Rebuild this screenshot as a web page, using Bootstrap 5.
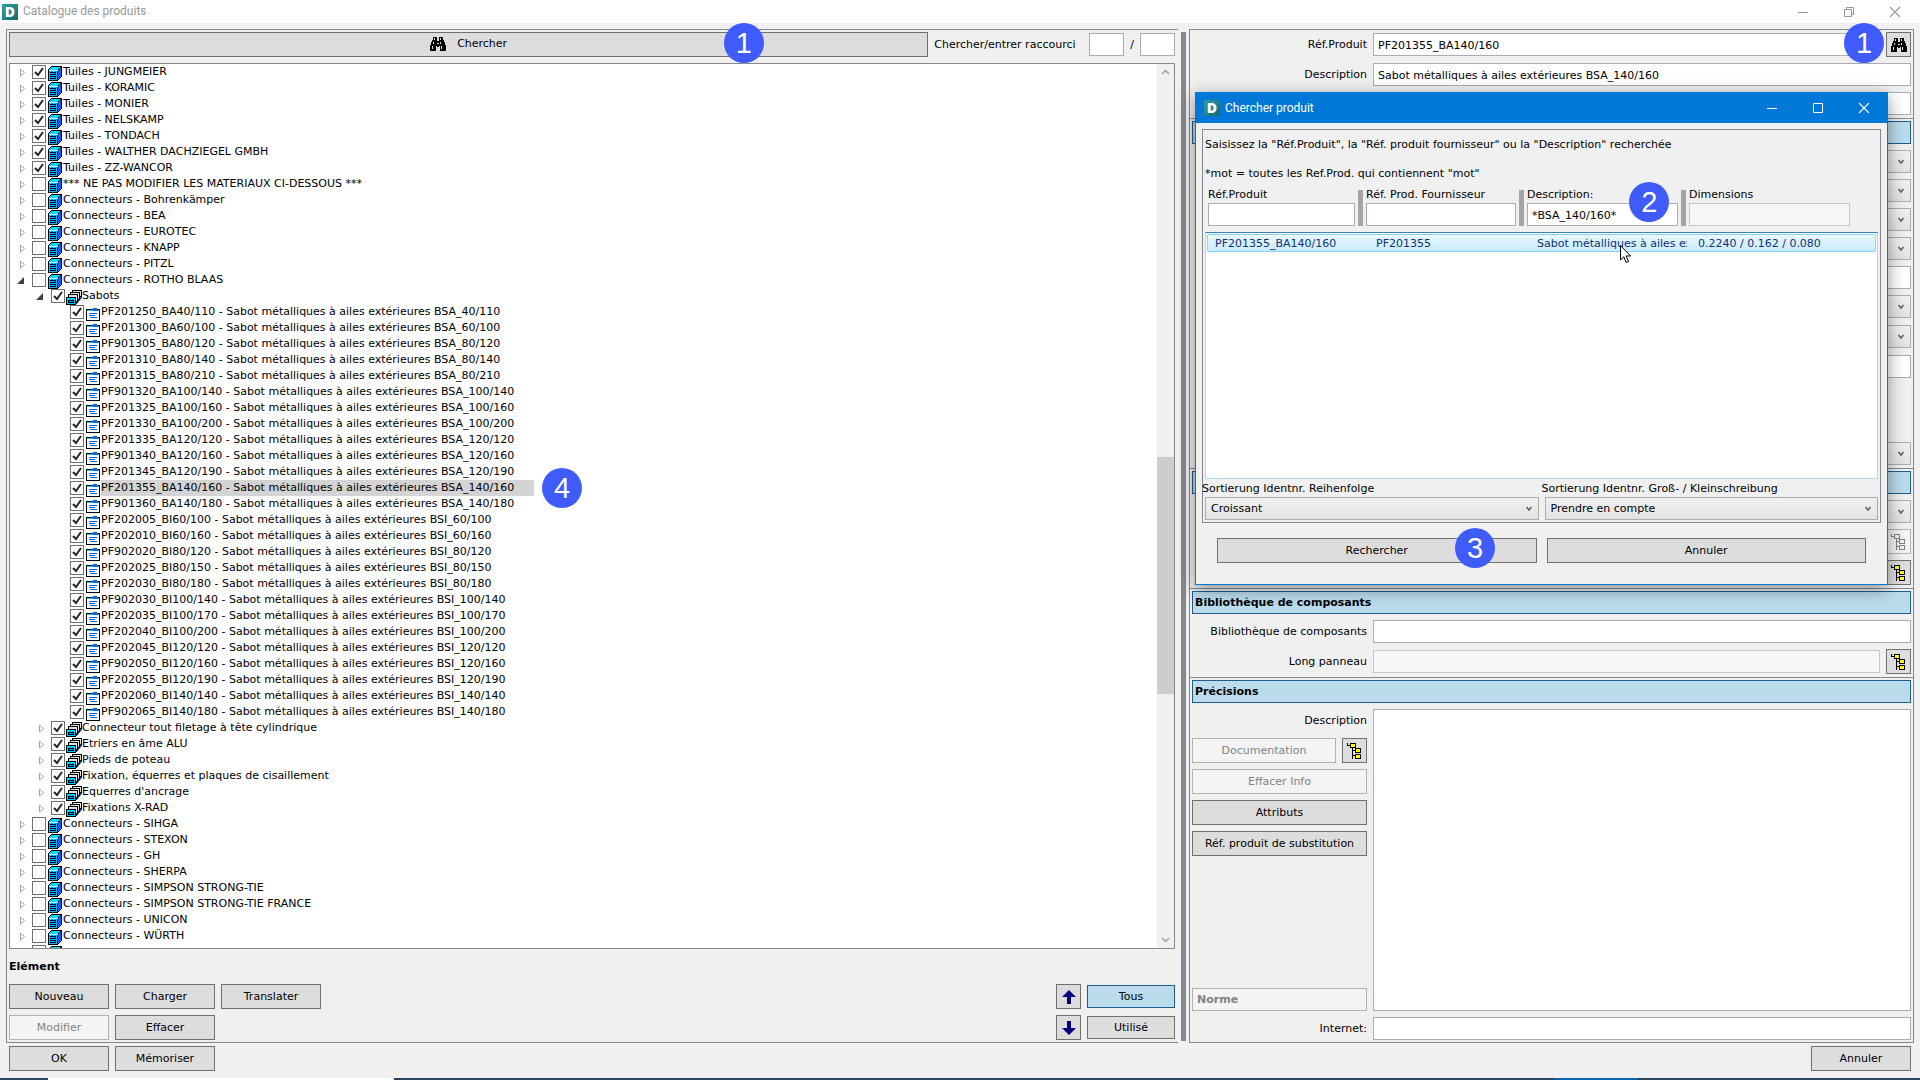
<!DOCTYPE html>
<html lang="fr">
<head>
<meta charset="utf-8">
<meta name="viewport" content="width=device-width, initial-scale=1">
<title>Catalogue des produits</title>
<link href="https://cdn.jsdelivr.net/npm/bootstrap@5.3.0/dist/css/bootstrap.min.css" rel="stylesheet">
<style>
  :root { --face:#f0f0f0; --frame:#828790; --accent:#0078d7; }
  body { font-family:"DejaVu Sans",Verdana,sans-serif; font-size:11px; line-height:16px; color:#000; background:var(--face); }
  .titlebar { height:23px; background:#fff; color:#999; font:12px/23px Roboto,"Open Sans",sans-serif; padding:0 2px; gap:5px; }
  .logo-d { width:16px; height:16px; background:linear-gradient(135deg,#2b9fa3,#176a72); color:#fff; font:900 14px/16px "Open Sans",sans-serif; text-align:center; flex:none; }
  .caption-btns { display:flex; }
  .caption-btn { width:46px; height:23px; padding:0; border:0; background:none; color:inherit; display:flex; align-items:center; justify-content:center; }
  .caption-btn svg { display:block; }

  .workspace { padding:6px 6px 0; gap:3px; min-height:0; }
  .pane-left { flex:1166 1 0; border:1px solid var(--frame); border-right:0; padding:2px 3px 2px 2px; gap:6px; }
  .splitter { width:5px; flex:none; background:#84888f; margin:3px 0 2px; }
  .pane-right { flex:723 1 0; border:1px solid var(--frame); }
  .gap-6 { gap:6px; }

  .ui-btn { height:25px; padding:1px 4px 0; border:1px solid #707070; border-radius:0; background:#ddd; color:#000; font-size:11px; line-height:16px; }
  .ui-btn:hover { background:#e5f1fb; border-color:var(--accent); color:#000; }
  .ui-btn:disabled { background:#f4f4f4; border-color:#adb2b5; color:#838383; opacity:1; }
  .ui-btn.short { height:23px; }
  .ui-btn.active-filter { background:#badced; border-color:#1f5c8c; }
  .search-btn { padding:0 0 2px; gap:11px; }
  .w-std { width:100px; }
  .w-filter { width:88px; }
  .w-icon { width:25px; padding:0; display:flex; align-items:center; justify-content:center; flex:none; }
  .shortcut-label { width:149px; flex:none; white-space:nowrap; padding-top:1px; }

  .ui-input { height:23px; min-height:0; padding:1px 4px 0; border:1px solid #abadb3; border-radius:0; background:#fff; color:#000; font-size:11px; line-height:16px; }
  .ui-input:disabled { background:#f7f7f7; border-color:#c6c6c6; }
  .ui-select { height:23px; padding:1px 20px 0 5px; border:1px solid #acacac; border-radius:0; color:#000; font-size:11px; line-height:16px;
    background:url("data:image/svg+xml,%3Csvg xmlns='http://www.w3.org/2000/svg' width='8' height='6'%3E%3Cpath d='M1.500 1l2.500 3 2.500-3' fill='none' stroke='%23606060' stroke-width='1.500'/%3E%3C/svg%3E") no-repeat right 5px top 8px/8px 6px, linear-gradient(#f0f0f0,#e3e3e3); }
  .w-short { width:35px; flex:none; }

  .tree-box { border:1px solid var(--frame); background:#fff; min-height:0; }
  .tree-list { overflow:hidden; min-width:0; }
  .tree-row { height:16px; white-space:nowrap; }
  .tree-row.lvl-1 { padding-left:19px; }
  .tree-row.lvl-2 { padding-left:38px; }
  .twisty { width:22px; height:16px; flex:none; display:block; }
  .tree-row label { display:flex; height:16px; }
  .tree-row input { appearance:none; width:14px; height:14px; margin:1px 0 0; border:1px solid #707070; background:#fff; flex:none; }
  .tree-row input:checked { background:url("data:image/svg+xml,%3Csvg xmlns='http://www.w3.org/2000/svg' width='12' height='12'%3E%3Cpath d='M2 6l3 3 5-7' fill='none' stroke='%23222' stroke-width='2'/%3E%3C/svg%3E") center no-repeat; }
  .tree-row svg.node { width:17px; height:17px; flex:none; overflow:visible; }
  .tree-row .node-text { line-height:16px; height:16px; }
  .tree-row.chosen .node-text { background:#d4d4d4; min-width:433px; }
  .scroll-track { width:17px; flex:none; background:#f0f0f0; }
  .scroll-track svg { display:block; width:17px; height:17px; }
  .scroll-thumb { background:#cdcdcd; flex:237 1 0; }
  .space-above { flex:376 1 0; }
  .space-below { flex:237 1 0; }

  .block { padding:2px; padding-bottom:3px; display:flex; flex-direction:column; gap:6px; }
  .block + .block { border-top:1px solid var(--frame); }
  .block:last-child { padding-bottom:2px; }
  .block-title { height:23px; margin:0; padding:1px 2px 0; border:1px solid #1f5c8c; background:#badced; font-size:11px; font-weight:700; line-height:20px; }
  .field { display:flex; align-items:center; gap:6px; min-height:23px; }
  .field > label, .side-col { width:175px; flex:none; text-align:right; }
  .field > label { padding-top:1px; }
  .field.tall { min-height:25px; }

  .footer-bar { padding:3px 9px 7px; }
  .taskbar { height:2px; background:#2c4257; }
  .taskbar i { display:block; height:2px; }

  .step-dot { width:40px; height:40px; border-radius:50%; background:#405bfb; color:#fff; font:29px/40px "Liberation Sans",Arial,sans-serif; text-align:center; z-index:5; pointer-events:none; }
  .dot-ref { right:27px; top:-9px; }
  .dot-mid { left:81%; top:9px; }
  .dot-crit { left:81%; top:16px; }

  .finder { position:absolute; top:92px; right:32px; width:693px; border:1px solid var(--accent); background:var(--face); box-shadow:0 4px 16px rgba(0,0,0,.42); z-index:10; }
  .finder-title { height:30px; background:var(--accent); color:#fff; font:12px/30px Roboto,"Open Sans",sans-serif; padding-left:8px; gap:5px; }
  .finder-title .caption-btn { height:30px; }
  .finder-body { margin:6px 6px 0; border:1px solid var(--frame); padding:2px; }
  .finder-body p { margin:0; line-height:16px; }
  .finder-body p.intro { padding-top:5px; margin-bottom:13px; }
  .crits { gap:3px; padding:4px 28px 6px 3px; }
  .crit { display:flex; flex-direction:column; }
  .crit label { height:17px; line-height:17px; }
  .crit-bar { width:5px; height:36px; background:#a5a5a5; flex:none; align-self:flex-end; }
  .hits { height:247px; border:1px solid #b5d7e8; border-top-color:#3c7fb1; background:#fff; padding:1px; }
  .hit { height:18px; border:1px solid #84d4f5; border-radius:2px; background:linear-gradient(#ebf8fe,#c6ebfb); color:#10307c; padding-left:7px; line-height:17px; white-space:nowrap; }
  .hit span { flex:none; width:161px; overflow:hidden; }
  .hit .clip-cell { width:150px; margin-right:11px; }
  .pointer { left:412px; top:10px; z-index:6; }
  .sorts { gap:6px; padding-top:2px; }
  .sorts label { display:block; margin-left:-3px; }
  .finder-actions { gap:10px; padding:15px 21px 21px; }
  #prec { resize:none; }
</style>
</head>
<body class="vh-100 overflow-hidden d-flex flex-column position-relative">

<svg class="d-none" xmlns="http://www.w3.org/2000/svg">
  <symbol id="i-cabinet" viewBox="0 0 17 17">
    <g shape-rendering="crispEdges">
      <path d="M2 5h1V4h1V3h1V2h11v11h-1v1h-1v1h-1v1h-1v1H2z" fill="#000"/>
      <path d="M3 6V5h1V4h1V3h9v1h-1v1h-1v1z" fill="#00d8ff"/>
      <path d="M12 6h1V5h1V4h1v9h-1v1h-1v1h-1z" fill="#0060ff"/>
      <path d="M3 7h8v9H3z" fill="#00b8ff"/>
      <path d="M3 6h9v1H3z" fill="#d0f8ff"/>
      <path d="M4 8h6v1H4zM9 8h1v3H9zM4 10h6v1H4zM4 12h6v1H4zM9 12h1v3H9zM4 14h6v1H4zM5 9" fill="#003"/>
    </g>
  </symbol>
  <symbol id="i-stack" viewBox="0 0 17 17">
    <path d="M11 9.500L16.500 4v5.500L11 16z" fill="#0068ff" stroke="#000" stroke-width="1"/>
    <g stroke="#000" fill="#ddd" shape-rendering="crispEdges">
      <path d="M7.500 2.500h9v6h-9z"/>
      <path d="M5.500 4.500h9v7h-9z"/>
      <path d="M3.500 6.500h9v7h-9z"/>
      <path d="M1.500 9.500h9v7h-9z" fill="#00d0ff"/>
      <path d="M3.500 12.500h5v2h-5z" fill="#00a0ff"/>
    </g>
  </symbol>
  <symbol id="i-sheet" viewBox="0 0 17 17">
    <g shape-rendering="crispEdges">
      <path d="M2 5h14v12H2z" fill="#000"/>
      <path d="M3 8h12v8H3z" fill="#fff"/>
      <path d="M3 6h12v1H3z" fill="#00d8ff"/>
      <path d="M9 4h4v1h1v2H8V5h1z" fill="#0068e0"/>
      <path d="M3 7h12v1H3z" fill="#fff"/>
      <path d="M5 9h8v1H5zM5 11h6v1H5zM6 13h7v1H6z" fill="#0068ff"/>
    </g>
  </symbol>
  <symbol id="i-binoc" viewBox="0 0 16 14">
    <g shape-rendering="crispEdges">
      <path d="M3 0h4v4h2V0h4v3h1v2h1v3h1v6h-6V9H9v1H7V9H6v5H0V8h1V5h1V3h1z" fill="#000"/>
      <path d="M4 1h1v2H4zM10 1h1v2h-1zM3 5h1v2H3zM10 5h1v2h-1zM2 9h1v3H2zM11 9h1v3h-1zM7 6h2v1H7z" fill="#ddd"/>
    </g>
  </symbol>
  <symbol id="i-nodes" viewBox="0 0 15 17">
    <g shape-rendering="crispEdges">
      <path d="M0 1h1v2h3v1H0zM5 5h1v12H5zM6 8h3v1H6zM6 13h3v1H6z" fill="currentColor"/>
      <path d="M3 1h6v5H3zM8 6h6v5H8zM8 12h6v5H8z" fill="currentColor"/>
      <path d="M4 2h4v3H4zM9 7h4v3H9zM9 13h4v3H9z" fill="var(--lamp,#ff0)"/>
    </g>
  </symbol>
  <symbol id="i-min" viewBox="0 0 12 12"><path d="M1 6.500h10" stroke="currentColor"/></symbol>
  <symbol id="i-max" viewBox="0 0 12 12"><path d="M1.500 1.500h9v9h-9z" fill="none" stroke="currentColor"/></symbol>
  <symbol id="i-restore" viewBox="0 0 12 12"><path d="M1.500 3.500h7v7h-7zM3.500 3.500v-2h7v7h-2" fill="none" stroke="currentColor"/></symbol>
  <symbol id="i-close" viewBox="0 0 12 12"><path d="M1 1l10 10M11 1L1 11" stroke="currentColor" stroke-width="1.100"/></symbol>
</svg>

<header class="titlebar d-flex align-items-center">
  <span class="logo-d">D</span><span class="flex-grow-1">Catalogue des produits</span>
  <div class="caption-btns">
    <button class="caption-btn" aria-label="Réduire"><svg width="12" height="12"><use href="#i-min"/></svg></button>
    <button class="caption-btn" aria-label="Restaurer"><svg width="12" height="12"><use href="#i-restore"/></svg></button>
    <button class="caption-btn" aria-label="Fermer"><svg width="12" height="12"><use href="#i-close"/></svg></button>
  </div>
</header>

<main class="workspace d-flex flex-grow-1">
  <section class="pane-left d-flex flex-column">
    <div class="d-flex align-items-center gap-6">
      <button class="ui-btn search-btn flex-grow-1 position-relative d-flex align-items-center justify-content-center">
        <svg width="16" height="14"><use href="#i-binoc"/></svg><span>Chercher</span>
        <span class="step-dot position-absolute translate-middle" style="left:80%;top:10px">1</span>
      </button>
      <label for="short1" class="shortcut-label">Chercher/entrer raccourci</label>
      <input id="short1" class="ui-input w-short"><span>/</span>
      <input class="ui-input w-short" aria-label="Raccourci, suite">
    </div>

    <div class="tree-box d-flex flex-grow-1">
      <div class="tree-list flex-grow-1" id="tree"></div>
      <div class="scroll-track d-flex flex-column">
        <svg viewBox="0 0 17 17"><path d="M5 10l3.500-3.500L12 10" fill="none" stroke="#a0a0a0" stroke-width="1.500"/></svg>
        <div class="space-above"></div><div class="scroll-thumb"></div><div class="space-below"></div>
        <svg viewBox="0 0 17 17"><path d="M5 7l3.500 3.500L12 7" fill="none" stroke="#a0a0a0" stroke-width="1.500"/></svg>
      </div>
    </div>

    <div class="field fw-bold">Elément</div>
    <div class="d-flex align-items-center gap-6">
      <button class="ui-btn w-std">Nouveau</button>
      <button class="ui-btn w-std">Charger</button>
      <button class="ui-btn w-std">Translater</button>
      <button class="ui-btn w-icon ms-auto" aria-label="Monter"><svg width="14" height="14"><path d="M7 0l7 7H9v7H5V7H0z" fill="#000080"/></svg></button>
      <button class="ui-btn short w-filter active-filter">Tous</button>
    </div>
    <div class="d-flex align-items-center gap-6">
      <button class="ui-btn w-std" disabled>Modifier</button>
      <button class="ui-btn w-std">Effacer</button>
      <button class="ui-btn w-icon ms-auto" aria-label="Descendre"><svg width="14" height="14"><path d="M7 14l7-7H9V0H5v7H0z" fill="#000080"/></svg></button>
      <button class="ui-btn short w-filter">Utilisé</button>
    </div>
  </section>

  <div class="splitter"></div>

  <section class="pane-right d-flex flex-column">
    <div class="block">
      <div class="field tall position-relative">
        <label for="ref">Réf.Produit</label>
        <input id="ref" class="ui-input flex-grow-1" value="PF201355_BA140/160">
        <button class="ui-btn w-icon" aria-label="Chercher"><svg width="16" height="14"><use href="#i-binoc"/></svg></button>
        <span class="step-dot dot-ref position-absolute">1</span>
      </div>
      <div class="field"><label for="desc">Description</label><input id="desc" class="ui-input flex-grow-1" value="Sabot métalliques à ailes extérieures BSA_140/160"></div>
      <div class="field"><label></label><input class="ui-input flex-grow-1" aria-label="Description 2"></div>
    </div>
    <div class="block">
      <h2 class="block-title"></h2>
      <div class="field"><label></label><select class="ui-select form-select" aria-label="Champ 1"><option></option></select></div>
      <div class="field"><label></label><select class="ui-select form-select" aria-label="Champ 2"><option></option></select></div>
      <div class="field"><label></label><select class="ui-select form-select" aria-label="Champ 3"><option></option></select></div>
      <div class="field"><label></label><select class="ui-select form-select" aria-label="Champ 4"><option></option></select></div>
      <div class="field"><label></label><input class="ui-input flex-grow-1" aria-label="Champ 5"></div>
      <div class="field"><label></label><select class="ui-select form-select" aria-label="Champ 6"><option></option></select></div>
      <div class="field tall"><label></label><select class="ui-select form-select" aria-label="Champ 7"><option></option></select></div>
      <div class="field"><label></label><input class="ui-input flex-grow-1" aria-label="Champ 8"></div>
      <div class="field"></div>
      <div class="field"></div>
      <div class="field"><label></label><select class="ui-select form-select" aria-label="Champ 9"><option></option></select></div>
    </div>
    <div class="block">
      <h2 class="block-title"></h2>
      <div class="field"><label></label><select class="ui-select form-select" aria-label="Champ 10"><option></option></select></div>
      <div class="field tall justify-content-end"><button class="ui-btn w-icon" disabled aria-label="Arborescence"><svg width="15" height="17" style="--lamp:#f4f4f4"><use href="#i-nodes"/></svg></button></div>
      <div class="field tall justify-content-end"><button class="ui-btn w-icon" aria-label="Arborescence"><svg width="15" height="17"><use href="#i-nodes"/></svg></button></div>
    </div>
    <div class="block">
      <h2 class="block-title">Bibliothèque de composants</h2>
      <div class="field"><label for="bib">Bibliothèque de composants</label><input id="bib" class="ui-input flex-grow-1"></div>
      <div class="field tall"><label for="long">Long panneau</label><input id="long" class="ui-input flex-grow-1" disabled>
        <button class="ui-btn w-icon" aria-label="Arborescence"><svg width="15" height="17"><use href="#i-nodes"/></svg></button></div>
    </div>
    <div class="block flex-grow-1">
      <h2 class="block-title">Précisions</h2>
      <div class="d-flex gap-6 flex-grow-1">
        <div class="side-col d-flex flex-column gap-6">
          <div class="field justify-content-end"><label for="prec">Description</label></div>
          <div class="d-flex gap-6">
            <button class="ui-btn flex-grow-1" disabled>Documentation</button>
            <button class="ui-btn w-icon" aria-label="Arborescence"><svg width="15" height="17"><use href="#i-nodes"/></svg></button>
          </div>
          <button class="ui-btn" disabled>Effacer Info</button>
          <button class="ui-btn">Attributs</button>
          <button class="ui-btn text-nowrap">Réf. produit de substitution</button>
          <button class="ui-btn short mt-auto text-start fw-bold px-1" disabled>Norme</button>
        </div>
        <textarea id="prec" class="ui-input flex-grow-1 h-auto"></textarea>
      </div>
      <div class="field"><label for="net">Internet:</label><input id="net" class="ui-input flex-grow-1"></div>
    </div>
  </section>
</main>

<footer class="footer-bar d-flex gap-6">
  <button class="ui-btn w-std">OK</button>
  <button class="ui-btn w-std">Mémoriser</button>
  <button class="ui-btn w-std ms-auto">Annuler</button>
</footer>
<div class="taskbar d-flex">
  <i style="width:2.5%"></i><i class="bg-white" style="width:18%"></i><i style="width:60.4%"></i><i style="width:4.4%;background:#0a64ad"></i>
</div>

<section class="finder" role="dialog" aria-label="Chercher produit">
  <div class="finder-title d-flex align-items-center">
    <span class="logo-d">D</span><span class="flex-grow-1">Chercher produit</span>
    <div class="caption-btns">
      <button class="caption-btn" aria-label="Réduire"><svg width="12" height="12"><use href="#i-min"/></svg></button>
      <button class="caption-btn" aria-label="Agrandir"><svg width="12" height="12"><use href="#i-max"/></svg></button>
      <button class="caption-btn" aria-label="Fermer"><svg width="12" height="12"><use href="#i-close"/></svg></button>
    </div>
  </div>
  <div class="finder-body">
    <p class="intro">Saisissez la "Réf.Produit", la "Réf. produit fournisseur" ou la "Description" recherchée</p>
    <p>*mot = toutes les Ref.Prod. qui contiennent "mot"</p>
    <div class="crits d-flex position-relative">
      <div class="crit" style="flex:147 1 0"><label for="c1">Réf.Produit</label><input id="c1" class="ui-input w-100"></div>
      <div class="crit-bar"></div>
      <div class="crit" style="flex:150 1 0"><label for="c2">Réf. Prod. Fournisseur</label><input id="c2" class="ui-input w-100"></div>
      <div class="crit-bar"></div>
      <div class="crit position-relative" style="flex:151 1 0"><label for="c3">Description:</label><input id="c3" class="ui-input w-100" value="*BSA_140/160*">
        <span class="step-dot dot-crit position-absolute translate-middle">2</span></div>
      <div class="crit-bar"></div>
      <div class="crit" style="flex:161 1 0"><label for="c4">Dimensions</label><input id="c4" class="ui-input w-100" disabled></div>
    </div>
    <div class="hits">
      <div class="hit d-flex position-relative">
        <span>PF201355_BA140/160</span><span>PF201355</span><span class="clip-cell">Sabot métalliques à ailes extérieures</span><span>0.2240 / 0.162 / 0.080</span>
        <svg class="pointer position-absolute" width="13" height="20"><path d="M.5.5v14.500l3.300-3.200 2.400 5.700 2.300-1-2.400-5.500h4.500z" fill="#fff" stroke="#000"/></svg>
      </div>
    </div>
    <div class="sorts d-flex">
      <div class="flex-fill w-50"><label for="s1">Sortierung Identnr. Reihenfolge</label>
        <select id="s1" class="ui-select form-select"><option>Croissant</option></select></div>
      <div class="flex-fill w-50"><label for="s2">Sortierung Identnr. Groß- / Kleinschreibung</label>
        <select id="s2" class="ui-select form-select"><option>Prendre en compte</option></select></div>
    </div>
  </div>
  <div class="finder-actions d-flex">
    <button class="ui-btn flex-fill w-50 position-relative">Rechercher<span class="step-dot dot-mid position-absolute translate-middle">3</span></button>
    <button class="ui-btn flex-fill w-50">Annuler</button>
  </div>
</section>

<script src="https://cdn.jsdelivr.net/npm/bootstrap@5.3.0/dist/js/bootstrap.bundle.min.js"></script>
<script>
  const shoe = (ref, kind, size) => ({ lvl: 2, on: true, text: `PF${ref}_${kind.slice(1)}${size} - Sabot métalliques à ailes extérieures BS${kind[0]}_${size}` });
  const ba = [["201250","40/110"],["201300","60/100"],["901305","80/120"],["201310","80/140"],["201315","80/210"],["901320","100/140"],["201325","100/160"],["201330","100/200"],["201335","120/120"],["901340","120/160"],["201345","120/190"],["201355","140/160"],["901360","140/180"]];
  const bi = [["202005","60/100"],["202010","60/160"],["902020","80/120"],["202025","80/150"],["202030","80/180"],["902030","100/140"],["202035","100/170"],["202040","100/200"],["202045","120/120"],["902050","120/160"],["202055","120/190"],["202060","140/140"],["902065","140/180"]];
  const rows = [
    ...["JUNGMEIER","KORAMIC","MONIER","NELSKAMP","TONDACH","WALTHER DACHZIEGEL GMBH","ZZ-WANCOR"].map(n => ({ lvl: 0, on: true, text: "Tuiles - " + n })),
    { lvl: 0, text: "*** NE PAS MODIFIER LES MATERIAUX CI-DESSOUS ***" },
    ...["Bohrenkämper","BEA","EUROTEC","KNAPP","PITZL"].map(n => ({ lvl: 0, text: "Connecteurs - " + n })),
    { lvl: 0, open: true, text: "Connecteurs - ROTHO BLAAS" },
    { lvl: 1, on: true, open: true, text: "Sabots" },
    ...ba.map(([r, s]) => shoe(r, "ABA", s)),
    ...bi.map(([r, s]) => shoe(r, "IBI", s)),
    ...["Connecteur tout filetage à tête cylindrique","Etriers en âme ALU","Pieds de poteau","Fixation, équerres et plaques de cisaillement","Equerres d'ancrage","Fixations X-RAD"].map(t => ({ lvl: 1, on: true, text: t })),
    ...["SIHGA","STEXON","GH","SHERPA","SIMPSON STRONG-TIE","SIMPSON STRONG-TIE FRANCE","UNICON","WÜRTH"].map(n => ({ lvl: 0, text: "Connecteurs - " + n })),
    { lvl: 0, text: "" }
  ];
  const icons = ["i-cabinet", "i-stack", "i-sheet"];
  const closed = '<path d="M10.500 5v7l4-3.500z" fill="#fff" stroke="#a6a6a6"/>';
  const opened = '<path d="M14 5v7H7z" fill="#404040"/>';
  document.getElementById("tree").innerHTML = rows.map(r => {
    const chosen = r.text.startsWith("PF201355");
    const twist = r.lvl === 2 ? "" : r.open ? opened : closed;
    return `<div class="tree-row d-flex lvl-${r.lvl}${chosen ? " chosen" : ""}"><svg class="twisty">${twist}</svg><label>` +
      `<input type="checkbox"${r.on ? " checked" : ""}><svg class="node"><use href="#${icons[r.lvl]}"/></svg>` +
      `<span class="node-text position-relative">${r.text}${chosen ? '<span class="step-dot position-absolute top-50 start-100 translate-middle-y ms-2">4</span>' : ""}</span></label></div>`;
  }).join("");
</script>
</body>
</html>
